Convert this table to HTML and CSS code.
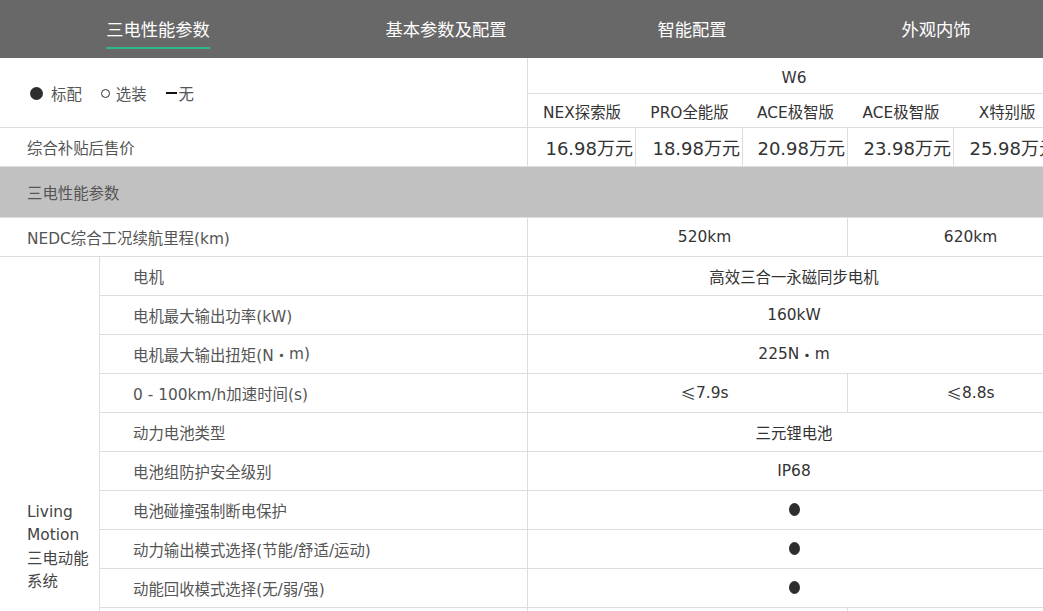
FILE: index.html
```html
<!DOCTYPE html>
<html lang="zh-CN">
<head>
<meta charset="utf-8">
<title>W6 参数配置</title>
<link rel="stylesheet" href="styles.css">
</head>
<body>
<header class="tabs">
  <div class="tab"><span class="tab-text active">三电性能参数</span></div>
  <div class="tab"><span class="tab-text">基本参数及配置</span></div>
  <div class="tab"><span class="tab-text">智能配置</span></div>
  <div class="tab"><span class="tab-text">外观内饰</span></div>
</header>

<main class="table">
  <div class="head">
    <div class="legend">
      <span class="lg-item"><i class="dot-std"></i>标配</span>
      <span class="lg-item"><i class="dot-opt"></i>选装</span>
      <span class="lg-item"><i class="dash-none"></i>无</span>
    </div>
    <div class="models">
      <div class="model-name">W6</div>
      <div class="vals versions">
        <div class="cell">NEX探索版</div>
        <div class="cell">PRO全能版</div>
        <div class="cell">ACE极智版</div>
        <div class="cell">ACE极智版</div>
        <div class="cell">X特别版</div>
      </div>
    </div>
  </div>

  <div class="row price">
    <div class="label">综合补贴后售价</div>
    <div class="vals">
      <div class="cell">16.98万元</div>
      <div class="cell">18.98万元</div>
      <div class="cell">20.98万元</div>
      <div class="cell">23.98万元</div>
      <div class="cell">25.98万元</div>
    </div>
  </div>

  <div class="section">三电性能参数</div>

  <div class="row">
    <div class="label">NEDC综合工况续航里程(km)</div>
    <div class="vals">
      <div class="cell span3 split">520km</div>
      <div class="cell span2 split">620km</div>
    </div>
  </div>

  <div class="group">
    <div class="group-label">Living Motion 三电动能系统</div>
    <div class="group-rows">
      <div class="row"><div class="sub-label">电机</div><div class="vals"><div class="cell span5">高效三合一永磁同步电机</div></div></div>
      <div class="row"><div class="sub-label">电机最大输出功率(kW)</div><div class="vals"><div class="cell span5">160kW</div></div></div>
      <div class="row"><div class="sub-label">电机最大输出扭矩(N<span class="cjk"> ・ </span>m)</div><div class="vals"><div class="cell span5">225N<span class="cjk"> ・ </span>m</div></div></div>
      <div class="row"><div class="sub-label">0 - 100km/h加速时间(s)</div><div class="vals"><div class="cell span3 split"><span class="cjk">≤</span>7.9s</div><div class="cell span2 split"><span class="cjk">≤</span>8.8s</div></div></div>
      <div class="row"><div class="sub-label">动力电池类型</div><div class="vals"><div class="cell span5">三元锂电池</div></div></div>
      <div class="row"><div class="sub-label">电池组防护安全级别</div><div class="vals"><div class="cell span5">IP68</div></div></div>
      <div class="row"><div class="sub-label">电池碰撞强制断电保护</div><div class="vals"><div class="cell span5"><i class="dot-val"></i></div></div></div>
      <div class="row"><div class="sub-label">动力输出模式选择(节能/舒适/运动)</div><div class="vals"><div class="cell span5"><i class="dot-val"></i></div></div></div>
      <div class="row"><div class="sub-label">动能回收模式选择(无/弱/强)</div><div class="vals"><div class="cell span5"><i class="dot-val"></i></div></div></div>
      <div class="row"><div class="sub-label">电池能量(kWh)</div><div class="vals"><div class="cell span3 split">52.5kWh</div><div class="cell span2 split">63.4kWh</div></div></div>
      <div class="row"><div class="sub-label">快充时间(30%-80%)</div><div class="vals"><div class="cell span5">0.5h</div></div></div>
      <div class="row"><div class="sub-label">慢充时间(0-100%)</div><div class="vals"><div class="cell span5">8h</div></div></div>
      <div class="row"><div class="sub-label">电池热管理系统</div><div class="vals"><div class="cell span5"><i class="dot-val"></i></div></div></div>
      <div class="row"><div class="sub-label">智能预约充电</div><div class="vals"><div class="cell span5"><i class="dot-val"></i></div></div></div>
      <div class="row"><div class="sub-label">对外放电功能</div><div class="vals"><div class="cell span5"><i class="dot-val"></i></div></div></div>
    </div>
  </div>
</main>
</body>
</html>
```

FILE: styles.css
```css
* { box-sizing: border-box; }

html, body {
  margin: 0;
  padding: 0;
  overflow: hidden;
  background: #ffffff;
}

body {
  font-family: "DejaVu Sans", "Noto Sans CJK SC", sans-serif;
  font-size: 15.4px;
  color: #555555;
  width: 1043px;
}

.cjk { font-family: "Noto Sans CJK SC", sans-serif; }

/* ---------- tabs ---------- */
.tabs {
  height: 58px;
  background: #686868;
  display: grid;
  grid-template-columns: 316px 260px 232px 256px;
  width: 1064px;
}

.tab {
  display: flex;
  justify-content: center;
  align-items: flex-start;
}

.tab-text {
  margin-top: 17px;
  font-family: "Noto Sans CJK SC", sans-serif;
  font-size: 17.3px;
  line-height: 24px;
  color: #ffffff;
  padding-bottom: 6px;
  border-bottom: 2px solid transparent;
  white-space: nowrap;
}

.tab-text.active { border-bottom-color: #2fb68c; }

/* ---------- table ---------- */
.table {
  width: 1060px;
}

.head {
  display: flex;
  height: 70px;
  border-bottom: 1px solid #dddddd;
}

.legend {
  width: 528px;
  border-right: 1px solid #dddddd;
  display: flex;
  align-items: center;
  padding-left: 30px;
  gap: 19px;
  padding-top: 1px;
}

.lg-item {
  display: flex;
  align-items: center;
  white-space: nowrap;
}

.dot-std {
  width: 13px;
  height: 13px;
  border-radius: 50%;
  background: #2e2e2e;
  margin-right: 8px;
}

.dot-opt {
  width: 9px;
  height: 9px;
  border-radius: 50%;
  border: 1.6px solid #2e2e2e;
  margin-right: 6px;
}

.dash-none {
  width: 11px;
  height: 2.5px;
  background: #111111;
  margin-right: 2px;
}

.models {
  width: 532px;
  display: flex;
  flex-direction: column;
}

.model-name {
  height: 36px;
  border-bottom: 1px solid #dddddd;
  display: flex;
  align-items: center;
  justify-content: center;
  padding-top: 5px;
  color: #333333;
}

.vals {
  display: grid;
  grid-template-columns: 108px 107px 105px 106px 106px;
  width: 532px;
}

.versions {
  flex: 1;
  color: #333333;
}

.versions .cell {
  border-right: none;
}

.cell {
  display: flex;
  align-items: center;
  justify-content: center;
  border-right: 1px solid #dddddd;
  color: #333333;
  white-space: nowrap;
}

.span2 { grid-column: span 2; }
.span3 { grid-column: span 3; }
.span5 { grid-column: span 5; border-right: none; }

.split { padding-left: 34px; }

.row {
  display: flex;
  height: 39px;
  border-bottom: 1px solid #dddddd;
}

.label {
  width: 528px;
  border-right: 1px solid #dddddd;
  display: flex;
  align-items: center;
  padding-left: 27px;
}

.price .cell {
  justify-content: flex-end;
  padding-right: 2px;
  font-size: 18px;
}

.section {
  height: 51px;
  background: #c1c1c1;
  border-bottom: 1px solid #dddddd;
  display: flex;
  align-items: center;
  padding-left: 27px;
  width: 1060px;
}

.group {
  display: flex;
}

.group-label {
  width: 100px;
  flex: none;
  border-right: 1px solid #dddddd;
  display: flex;
  align-items: center;
  padding: 0 10px 4px 27px;
  line-height: 23.5px;
  color: #444444;
}

.group-rows {
  width: 960px;
}

.sub-label {
  width: 428px;
  border-right: 1px solid #dddddd;
  display: flex;
  align-items: center;
  padding-left: 33px;
  white-space: nowrap;
}

.dot-val {
  width: 11px;
  height: 13px;
  border-radius: 50%;
  background: #2e2e2e;
  margin-top: -1px;
}
```
